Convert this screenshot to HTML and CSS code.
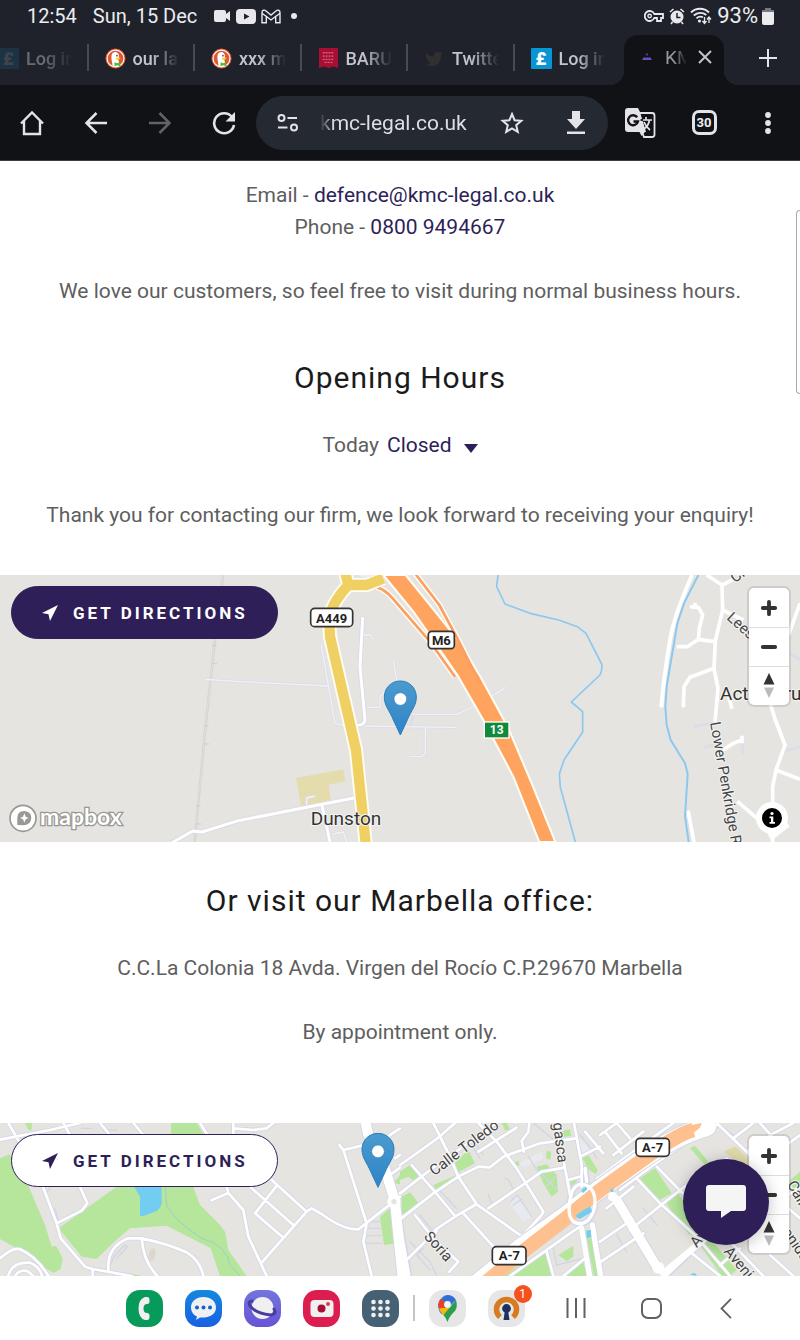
FILE: index.html
```html
<!DOCTYPE html>
<html lang="en">
<head>
<meta charset="utf-8">
<meta name="viewport" content="width=device-width, initial-scale=1">
<title>KMC Legal</title>
<link rel="stylesheet" href="styles.css">
</head>
<body>
<svg class="defs" width="0" height="0" aria-hidden="true">
  <defs>
    <linearGradient id="pin-fill" x1="0" y1="0" x2="0" y2="1"><stop offset="0" stop-color="#4b9bd0"/><stop offset="1" stop-color="#2f83c6"/></linearGradient>
    <symbol id="pin" viewBox="0 0 34 56"><path d="M17 1C8 1 1 8 1 17c0 9 5 13 9 23l7 15 7-15c4-10 9-14 9-23C33 8 26 1 17 1z" fill="url(#pin-fill)" stroke="#2e7fb8" stroke-width="1"/><circle cx="17" cy="19" r="6.3" fill="#fff" stroke="#3a7fae" stroke-width=".6"/></symbol>
    <symbol id="duck" viewBox="0 0 22 22"><circle cx="11" cy="11" r="10.5" fill="#de5833"/><circle cx="11" cy="11" r="8.8" fill="none" stroke="#fff" stroke-width="1.2"/><path d="M8 19C7.500 14 6 10 7 7c1-3 5-4 7-1 1 2 .8 4 0 6l1 6c-2 2-5 2.500-7 1z" fill="#fff"/><path d="M11.500 10.500c2-1 4-.8 5 0-1 1.500-3 2-5 1.500z" fill="#fdd20a"/><path d="M10 15l3 1 3-1v4l-3-1-3 1z" fill="#4cba3c"/><circle cx="12.500" cy="8" r=".9" fill="#2d4f8e"/></symbol>
    <symbol id="arrow" viewBox="0 0 18 18"><path d="M17 1L1 9l6.500 1.200L9 17z" fill="currentColor"/></symbol>
    <symbol id="compass" viewBox="0 0 12 26"><path d="M6 0l5.500 11.500H.5z" fill="#333"/><path d="M6 25l5-10.500H1z" fill="#bbb"/></symbol>
    <symbol id="plus" viewBox="0 0 16 16"><path d="M8 2.500v11M2.500 8h11" stroke="#333" stroke-width="3.400" stroke-linecap="round"/></symbol>
    <symbol id="minus" viewBox="0 0 16 16"><path d="M2.500 8h11" stroke="#333" stroke-width="3.400" stroke-linecap="round"/></symbol>
  </defs>
</svg>

<header class="browser">
  <div class="status">
    <span class="status-left">
      <span>12:54</span><span class="date">Sun, 15 Dec</span>
      <span class="status-icons">
      <svg width="17" height="14" viewBox="0 0 17 14"><path d="M2 1h8q2 0 2 2v2l4-3v10l-4-3v2q0 2-2 2H2q-2 0-2-2V3q0-2 2-2z" fill="#e8e8ec"/></svg>
      <svg width="20" height="15" viewBox="0 0 20 15"><rect width="20" height="15" rx="4" fill="#e8e8ec"/><path d="M8 4.500l5.500 3-5.500 3z" fill="#1f222b"/></svg>
      <svg width="20" height="15" viewBox="0 0 20 15"><path d="M1 13.800V3.500C1 1 3.500 .5 5 2l5 4 5-4c1.500-1.500 4-1 4 1.500v10.300h-4.300V7.500L10 11 5.300 7.500v6.300zM5.300 7.500L1 4.200M14.700 7.500L19 4.200" fill="none" stroke="#e8e8ec" stroke-width="1.400"/></svg>
      <svg width="8" height="8" viewBox="0 0 8 8"><circle cx="4" cy="4" r="3" fill="#e8e8ec"/></svg>
      </span>
    </span>
    <span class="status-right">
      <svg width="20" height="14" viewBox="0 0 20 14"><path d="M10.300 5H19v4h-2v3h-4V9h-2.700A5 5 0 1 1 10.300 5z" fill="none" stroke="#e8e8ec" stroke-width="1.800"/><circle cx="5.600" cy="7" r="1.700" fill="none" stroke="#e8e8ec" stroke-width="1.400"/></svg>
      <svg width="16" height="17" viewBox="0 0 16 17"><circle cx="8" cy="9" r="6.500" fill="#e8e8ec"/><path d="M1 4l3.500-3M15 4l-3.500-3M3.500 14L2 16M12.500 14l1.500 2" stroke="#e8e8ec" stroke-width="1.600"/><path d="M8 5v4.500h3.500" fill="none" stroke="#1f222b" stroke-width="1.500"/></svg>
      <svg width="22" height="18" viewBox="0 0 22 18"><path d="M1 5.500C6 .5 14 .5 19 5.500M3.800 8.500c3.600-3.500 9-3.500 12.500-.5M6.500 11.300c2-2 4.500-2 6.500-1" fill="none" stroke="#e8e8ec" stroke-width="1.800"/><circle cx="9.500" cy="14" r="1.600" fill="#e8e8ec"/><path d="M14.500 10v6M12.500 14l2 2.500 2-2.500M19 16v-6M17 12.500l2-2.500 2 2.500" fill="none" stroke="#e8e8ec" stroke-width="1.300"/></svg>
      <span class="battery">93%
      <svg width="12" height="17" viewBox="0 0 12 17"><path d="M3 0h6v2h3v3H0V2h3z" fill="#777981"/><path d="M0 4h12v11q0 2-2 2H2q-2 0-2-2z" fill="#ececef"/></svg></span>
    </span>
  </div>

  <nav class="tabstrip" aria-label="Open tabs">
    <div class="tabs">
      <a class="tab tab-faint" href="#"><span class="fav fav-pound">£</span><span class="tab-name">Log in</span></a>
      <a class="tab" href="#"><svg class="fav"><use href="#duck"/></svg><span class="tab-name">our law</span></a>
      <a class="tab" href="#"><svg class="fav"><use href="#duck"/></svg><span class="tab-name">xxx mo</span></a>
      <a class="tab" href="#"><svg class="fav" viewBox="0 0 22 22"><path d="M1 0h20v21l-5-1.500-5 1.500-5-1.500L1 21z" fill="#a90f35"/><path d="M5 5h12M5 8.500h12M5 12h12M7 15h8" stroke="#cf6580" stroke-width="1.400" stroke-dasharray="2 1"/></svg><span class="tab-name">BARUC</span></a>
      <a class="tab" href="#"><svg class="fav" viewBox="0 0 22 22"><path d="M2 5q4 4 8 4 0-5 4-5 2 0 3 1l3-1-2 3q0 11-9 12-4 0-7-2 4 0 5-2-3-1-4-3-2-3-1-7z" fill="#32302f"/></svg><span class="tab-name">Twitter</span></a>
      <a class="tab" href="#"><span class="fav fav-pound">£</span><span class="tab-name">Log in</span></a>
    </div>
    <div class="tab-active">
      <svg width="10" height="8" viewBox="0 0 10 8"><path d="M0 7h10l-2-3-2 1-1-1-1 1-2-1z" fill="#6f4cc0"/><circle cx="5" cy="1.500" r="1.200" fill="#4b3888"/></svg>
      <span class="active-name">KMC</span>
      <button class="icon-btn" aria-label="Close tab"><svg width="14" height="14" viewBox="0 0 14 14"><path d="M1 1l12 12M13 1L1 13" stroke="#c6c6cb" stroke-width="1.900"/></svg></button>
    </div>
    <button class="icon-btn new-tab" aria-label="New tab"><svg width="18" height="18" viewBox="0 0 18 18"><path d="M9 0v18M0 9h18" stroke="#e3e3e8" stroke-width="2"/></svg></button>
  </nav>

  <div class="toolbar">
    <button class="icon-btn" aria-label="Home"><svg width="26" height="26" viewBox="0 0 26 26"><path d="M2 13.500L13 2.500l11 11M5 11v13h16V11" fill="none" stroke="#e3e3e8" stroke-width="2.400"/></svg></button>
    <button class="icon-btn" aria-label="Back"><svg width="24" height="24" viewBox="0 0 24 24"><path d="M23 12H3M12.500 2L2.500 12l10 10" fill="none" stroke="#e3e3e8" stroke-width="2.500"/></svg></button>
    <button class="icon-btn" aria-label="Forward"><svg width="24" height="24" viewBox="0 0 24 24"><path d="M1 12h20M11.500 2l10 10-10 10" fill="none" stroke="#626367" stroke-width="2.500"/></svg></button>
    <button class="icon-btn" aria-label="Reload"><svg width="24" height="24" viewBox="0 0 24 24"><path d="M20 6A10 10 0 1 0 22 14" fill="none" stroke="#e3e3e8" stroke-width="2.600"/><path d="M23 1v9.500h-9.500z" fill="#e3e3e8"/></svg></button>
    <div class="omnibox">
      <button class="icon-btn" aria-label="Site information"><svg width="22" height="18" viewBox="0 0 22 18"><g fill="none" stroke="#e3e3e8" stroke-width="2"><circle cx="4.500" cy="4" r="3"/><path d="M10.500 4H20M1 13.500h9.500"/><circle cx="17" cy="13.500" r="3"/></g></svg></button>
      <input class="url" type="text" aria-label="Address" value="kmc-legal.co.uk">
      <button class="icon-btn" aria-label="Bookmark"><svg width="24" height="24" viewBox="0 0 24 24"><path d="M12 3l2.600 6.200 6.700.6-5.100 4.400 1.600 6.600L12 17.300l-5.800 3.500 1.600-6.600L2.700 9.800l6.700-.6z" fill="none" stroke="#e3e3e8" stroke-width="2"/></svg></button>
      <button class="icon-btn" aria-label="Download"><svg width="20" height="24" viewBox="0 0 20 24"><path d="M6 0h8v8h5l-9 10-9-10h5zM1 20.500h18V23H1z" fill="#e3e3e8"/></svg></button>
    </div>
    <button class="icon-btn" aria-label="Translate"><svg width="31" height="30" viewBox="0 0 31 30"><path d="M14 5h13q2.500 0 2.500 2.500v19q0 2.500-2.500 2.500H19l-2-5" fill="none" stroke="#e3e3e8" stroke-width="1.800"/><path d="M3 0h10l2 4 6 20H3q-3 0-3-3V3q0-3 3-3z" fill="#e3e3e8"/><path d="M14.500 24h5.500l-3.500 4z" fill="#e3e3e8"/><path d="M12.200 9.300A5 5 0 1 0 13 13.500H8.500" fill="none" stroke="#111216" stroke-width="2.300"/><path d="M15.500 12h2.500" stroke="#111216" stroke-width="1.800"/><path d="M18 12h9M21 9v3M24.500 12q-1 6-5.500 9M19 14q2 5 6 8" fill="none" stroke="#e3e3e8" stroke-width="1.700"/></svg></button>
    <button class="icon-btn" aria-label="30 open tabs"><span class="tab-count">30</span></button>
    <button class="icon-btn" aria-label="Menu"><svg width="6" height="24" viewBox="0 0 6 24"><g fill="#e3e3e8"><circle cx="3" cy="4" r="2.900"/><circle cx="3" cy="12" r="2.900"/><circle cx="3" cy="20" r="2.900"/></g></svg></button>
  </div>
</header>

<div class="edge-handle"></div>

<main>
  <section class="info">
    <p>Email - <a href="#">defence@kmc-legal.co.uk</a><br>Phone - <a href="#">0800 9494667</a></p>
    <p>We love our customers, so feel free to visit during normal business hours.</p>
    <h2>Opening Hours</h2>
    <div class="hours"><span>Today</span><button class="closed">Closed<svg width="14" height="10" viewBox="0 0 14 10"><path d="M0 0h14L7 9z" fill="#2e1f58"/></svg></button></div>
    <p>Thank you for contacting our firm, we look forward to receiving your enquiry!</p>
  </section>

  <section class="map map-office">
    <svg class="canvas" viewBox="0 15 2400 801" preserveAspectRatio="xMidYMid slice" role="img" aria-label="Map of Dunston">
      <g fill="none" stroke-linejoin="round">
        <path d="M672 15L645 230 618 480 586 816M667 15L640 230 613 480 582 816" stroke="#cfcdc9" stroke-width="2"/>
        <path d="M636 227h14M637 280h14M612 468h14M614 522h14M588 708h14M590 762h14" stroke="#cfcdc9" stroke-width="3"/>
        <path d="M888 624L1030 598 1036 634 985 644 993 690 950 700 903 706z" fill="#e4dcac"/>
        <g stroke="#dcdde8" stroke-width="9"><path d="M618 328L720 335 986 348M964 226L1005 460 1030 466 1068 466M1092 468L1360 473 1572 472M1278 473M1100 412H1140V380L1160 360M1180 272L1190 330M1235 433H1370L1425 408M1235 433L1230 470M1476 473V550L1465 560H1430M1400 433H1570L1625 408 1718 352M920 706V684L945 678M1090 195H1112L1120 208M1000 792L1030 786 1040 816M2080 470L2140 458M2110 532L2160 522M2350 240L2400 268M2350 545L2400 530M2226 520L2230 552M2062 722L2070 780" visibility="hidden"/></g>
        <g stroke="#dcdde8" stroke-width="9"><path d="M618 328L720 335 986 348M964 226L1005 460 1030 466 1068 466M1092 468L1200 470 1370 472M1276 473V550L1265 560H1230M1100 412H1140V380L1160 360M1180 272L1190 330M1235 433H1370L1425 408 1518 352M1240 433L1232 470M920 706V684L945 678M1090 195H1112L1120 208M1000 792L1030 786 1040 816M2080 470L2140 458M2110 532L2160 522M2350 240L2400 268M2350 545L2400 530M2226 520L2230 552M2062 722L2070 780"/></g>
        <g stroke="#f2f2f5" stroke-width="4"><path d="M618 328L720 335 986 348M964 226L1005 460 1030 466 1068 466M1092 468L1200 470 1370 472M1276 473V550L1265 560H1230M1100 412H1140V380L1160 360M1180 272L1190 330M1235 433H1370L1425 408 1518 352M920 706V684L945 678M1090 195H1112L1120 208M1000 792L1030 786 1040 816"/></g>
        <path d="M1088 145L1080 290 1095 450Q1094 466 1070 466M520 816L578 783 606 786 715 752 1062 684M966 706L990 816" stroke="#d8d9e6" stroke-width="14" stroke-linecap="round"/>
        <path d="M1088 145L1080 290 1095 450Q1094 466 1070 466M520 816L578 783 606 786 715 752 1062 684M966 706L990 816" stroke="#fff" stroke-width="9" stroke-linecap="round"/>
        <path d="M2076 15Q2020 145 2010 210 1990 330 1984 412" stroke="#fff" stroke-width="12"/>
        <g stroke="#fff" stroke-width="11"><path d="M2120 15L2166 45 2168 120 2146 212 2142 295 2154 355 2145 455M2166 45L2200 28M2168 120L2230 150M2400 100L2366 194M2070 110L2095 112 2108 135 2098 175 2095 208 2145 215M2095 208L2062 230H2030M2142 295L2070 322 2052 350 2050 412M2312 405L2326 450 2355 525 2328 600 2318 650V816M2328 600L2400 628M2212 694L2295 765 2320 812M2320 800L2366 765M2168 540L2200 520 2226 510M2180 360L2196 416M2064 722L2082 816M2085 98V112M2226 497V520"/></g>
        <path d="M1494 15L1490 50 1515 102 1590 130 1676 150 1732 170 1758 190 1805 282Q1808 300 1800 315L1714 396 1748 425V486L1692 570 1678 612 1681 652 1726 816" stroke="#8cc8f0" stroke-width="5"/>
        <path d="M2095 15L2052 100 2032 160 2000 350 1996 410 2000 465 2012 510 2055 580 2063 612 2055 740 2066 816" stroke="#8cc8f0" stroke-width="6"/>
        <path d="M1130 52Q1155 58 1178 85L1290 215 1365 320M1245 10L1318 105 1372 205 1440 340" stroke="#fffdf5" stroke-width="17"/>
        <path d="M1150 15L1240 125 1310 225 1375 320 1450 450 1540 620 1618 816H1666L1595 640 1525 475 1440 318 1375 212 1300 118 1217 15z" fill="#ffa45e" stroke="#fffdf5" stroke-width="6"/>
        <path d="M1130 52Q1155 58 1178 85L1290 215 1365 320M1245 10L1318 105 1372 205 1440 340" stroke="#fb9f62" stroke-width="8"/>
        <path d="M1035 5L1045 45Q990 105 988 150L990 200 1068 540 1097 820M1045 45L1100 45 1150 25" stroke="#fffdf5" stroke-width="42"/>
        <path d="M1035 5L1045 45Q990 105 988 150L990 200 1068 540 1097 820M1045 45L1100 45 1150 25" stroke="#f0cf63" stroke-width="31"/>
        <path d="M1068 8Q1098 38 1138 8z" fill="#eeeeee"/>
      </g>
      <g class="shield"><rect x="932" y="115" width="126" height="55" rx="12"/><text x="995" y="158">A449</text><rect x="1285" y="184" width="78" height="52" rx="10"/><text x="1324" y="225">M6</text></g>
      <rect x="1453" y="456" width="74" height="48" fill="#118a3c" stroke="#fff" stroke-width="4"/><text class="exit" x="1490" y="492">13</text>
      <g class="place"><text x="932" y="766">Dunston</text><text x="2160" y="390">Acton Trussell</text></g>
      <g class="street"><text transform="translate(2178 146) rotate(42)">Lees Lane</text><text transform="translate(2130 458) rotate(80)">Lower Penkridge Road</text><text transform="translate(2204 40) rotate(-35)">Cl</text></g>
      <use href="#pin" x="1150" y="330" width="102" height="168"/>
      <g class="logo"><circle cx="69" cy="745" r="39" fill="#fff" stroke="#999894" stroke-width="5"/><path d="M52 765V745Q52 723 73 723 94 725 94 744 92 766 70 766z" fill="#999894"/><path d="M73 730l4 10 9 4-9 4-4 10-4-10-9-4 9-4z" fill="#fff"/><text x="120" y="765">mapbox</text></g>
    </svg>
    <button class="directions directions-dark"><svg width="18" height="18"><use href="#arrow"/></svg>GET DIRECTIONS</button>
    <div class="zoom"><button aria-label="Zoom in"><svg width="18" height="18"><use href="#plus"/></svg></button><button aria-label="Zoom out"><svg width="18" height="18"><use href="#minus"/></svg></button><button aria-label="Reset bearing"><svg width="12" height="26"><use href="#compass"/></svg></button></div>
    <button class="attrib" aria-label="Attribution"><svg width="20" height="20" viewBox="0 0 20 20"><circle cx="10" cy="10" r="10" fill="#000"/><circle cx="10" cy="5.500" r="1.600" fill="#fff"/><path d="M7.500 8.500h3.800V14H13v1.800H7.500V14H9v-3.700H7.500z" fill="#fff"/></svg></button>
  </section>

  <section class="info info-marbella">
    <h2>Or visit our Marbella office:</h2>
    <p>C.C.La Colonia 18 Avda. Virgen del Rocío C.P.29670 Marbella</p>
    <p>By appointment only.</p>
  </section>

  <section class="map map-marbella">
    <svg class="canvas" viewBox="0 24 2400 459" preserveAspectRatio="xMidYMid slice" role="img" aria-label="Map of Marbella">
      <defs>
        <path id="west-lanes" d="M0 74L150 45 240 24M25 24L60 85M190 24L210 60M300 24l30 36M400 24l30 36M125 205L170 325 182 370 255 455 278 462 395 483M170 325L245 287 262 265 240 215M0 430Q40 395 60 403 110 425 145 483M25 483Q35 440 90 443 120 455 126 483M45 483Q60 460 85 470L100 483M325 465Q320 395 385 370L425 370Q500 385 560 412 600 435 610 483M425 370Q430 440 472 483M278 462V483M600 24l22 35M635 256L685 234 730 285 745 365 800 483M685 234L680 215M785 443L920 290 935 280 965 297Q1030 345 1075 343L1200 245M920 290L815 195M850 368L765 295 828 215M880 330L750 215M700 24V55M700 40L760 45 800 40 820 24M1018 90L1030 105 1100 325 1090 380 1115 483M1030 105L1085 92M1140 80L1200 40M1185 130L1200 120M1170 180L1200 158"/>
        <path id="east-lanes" d="M100 24L145 115 175 185 230 268 360 360H385M0 150L110 72 165 24M0 235L90 165 290 24M35 150L100 225 165 303M0 313L100 235 175 185 235 155 270 157 310 125 420 85 528 70M235 24L290 80 350 160 430 290 425 300 370 360M105 345L165 305 230 267M265 280L375 205 425 170 495 158M190 295L285 400M45 300L100 370 175 440 148 470M0 450L30 425 110 345 100 370M372 110L365 78 385 50 388 24M235 110L350 38M470 24L510 240M522 24L545 150V215M540 125L600 95M505 195L545 183M330 483L510 355 540 335M440 410L460 483M490 483L555 430M590 190L600 185 720 95 820 24M600 60L650 24M555 50L610 115M615 50L665 115M650 24L690 70M640 120L730 50M660 225L760 150 900 52 950 24M770 155L1000 390 1090 483M710 190L780 265 890 365 990 483M690 345L790 265 860 210M620 280L700 215M950 24L1060 130M1000 70L1060 24M1040 110L1120 55 1180 24M1080 24L1130 80M1165 240L1200 215M1165 280L1200 310M1160 90L1200 60M595 445L730 355M600 380L690 318M870 410L960 483M1020 400L960 450M1110 420L1180 483M860 210L980 130"/>
        <g id="east-avenues"><path d="M0 330L28 490M0 300L-15 260"/><path d="M545 335L570 483M577 328L603 483M650 255L770 455M800 480L905 380M555 160L560 200"/><path d="M543 208C570 208 585 230 585 260S568 326 540 326 505 300 508 270 520 208 543 208z"/></g>
      </defs>
      <g fill="#b5e69c">
        <path d="M0 130L28 118 80 200 135 330 155 395 168 392 188 430 182 462 160 474 130 455 60 405 0 372zM75 24H96L95 46 85 44zM513 24H590L612 60H513zM176 340L350 215H580L600 270 660 330 675 350 685 405 740 483H660L632 400 500 332 390 340 345 378 290 432 245 425zM385 474l40 9h-40zM1140 305L1170 280 1188 385 1152 390zM1180 205L1200 180V208z"/>
        <path transform="translate(1200)" d="M0 170L30 150 60 190 45 200 25 185 0 195zM5 245L30 232 60 270 5 308zM165 145L205 105 225 145 175 172zM100 210L170 180 135 215 110 225zM305 24h15l10 18-15 5zM340 145l15-8 6 12-16 6zM410 155L440 148 470 180 474 230 455 245 430 205zM440 107l13 3-2 24-12-4zM488 48l22-6 4 20-24 4zM510 198l22-4-15 28zM545 125L565 120 593 165 588 178 565 162zM720 190L765 160 815 235 772 258zM798 265L835 235 900 330 868 360zM870 100L885 92 925 140 915 150zM900 390L930 370 1010 465 990 483H965zM655 215L760 145 765 152 670 218zM310 483L430 408 440 412 455 483zM475 420L520 392V425L500 438zM500 483L550 440 560 483zM555 345H570L598 483H582zM1165 200L1200 170V230L1185 225z"/>
      </g>
      <path d="M1172 110L1205 94 1245 130V165z" transform="translate(1000)" fill="#e1dbac"/><path d="M2172 110L2205 94 2245 130V165z" fill="#e1dbac"/>
      <g fill="#e8eaf0" transform="translate(1200)"><path d="M355 145L425 110 432 130 370 158zM325 260L350 240 400 305 370 322zM530 60L580 115 545 130z"/></g>
      <path d="M402 214H485V265Q480 288 460 292L430 303H420V245z" fill="#72cdf1"/>
      <path d="M496 215L500 270Q520 315 605 370 680 390 690 450L720 483" fill="none" stroke="#9bcfc6" stroke-width="3"/>
      <ellipse cx="456" cy="419" rx="10" ry="20" fill="#dcd8d0" transform="rotate(15 456 419)"/>
      <g fill="none" stroke-linejoin="round" stroke-linecap="round">
        <path d="M328 455L345 420 375 390 382 396 350 430M165 280L175 320M150 220l-12 15M1100 320h40M1100 340h43M1100 362h45M1100 385h45M245 40h30M310 45h40" stroke="#d2d5e5" stroke-width="4"/>
        <path transform="translate(1200)" d="M205 75L240 130M215 65L250 120M315 190Q330 190 340 230M265 240l12 30M330 262L352 240 395 305M340 270l25-18M110 240L155 290M120 228L170 280M60 300L100 350M30 380L90 440 110 483M70 400L50 420 90 465M80 350l25 25M470 180L440 215M420 170L470 225M460 400L470 450 550 430M540 60Q575 100 590 130M400 24L480 90M385 125L420 180M950 24L1000 60M730 280L770 330M650 360L680 410" stroke="#d2d5e5" stroke-width="4"/>
        <g stroke="#d5d7e6" stroke-width="13"><use href="#west-lanes"/><use href="#east-lanes" transform="translate(1200)"/></g>
        <g stroke="#d5d7e6"><path d="M1095 15L1105 60M1150 145L1185 260 1208 490" stroke-width="36"/><use href="#east-avenues" transform="translate(1200)" stroke-width="20"/><path d="M1850 255L1970 455" stroke-width="34"/></g>
        <g stroke="#fff" stroke-width="8"><use href="#west-lanes"/><use href="#east-lanes" transform="translate(1200)"/></g>
        <g transform="translate(1200)"><path d="M215 520L360 400 500 300 600 222 720 137Q830 60 920 35" stroke="#d5d7e6" stroke-width="62"/><path d="M215 520L360 400 500 300 600 222 720 137Q830 60 920 35" stroke="#fff" stroke-width="56"/><path d="M230 525L375 405 500 308 600 226 720 140Q830 58 880 45" stroke="#ffc08f" stroke-width="43" stroke-linecap="butt"/><path d="M860 33L905 24 900 38 868 64z" fill="#ffc08f"/><circle cx="935" cy="16" r="20" stroke="#fff" stroke-width="8"/></g>
        <path d="M1095 15L1105 60M1150 145L1185 260 1208 490" stroke="#fff" stroke-width="30"/>
        <use href="#east-avenues" transform="translate(1200)" stroke="#fff" stroke-width="10"/>
        <path d="M1745 340L1770 490M1777 330L1803 490" stroke="#fff" stroke-width="16"/>
        <path d="M1850 255L1970 455" stroke="#fff" stroke-width="28"/><circle cx="1838" cy="245" r="14" fill="#fff"/><circle cx="1975" cy="458" r="18" fill="#fff"/><path d="M1990 475L2110 375" stroke="#fff" stroke-width="20"/>
        <circle cx="1182" cy="260" r="14" stroke="#fff" stroke-width="12" fill="#e5e4e0"/>
        <path d="M1744 225l14-10 4 8-14 12zM1728 300L1770 274 1776 290 1740 312 1730 306zM1760 348l12-4 2 22-14 2zM1832 222l8-2v10l-8 2zM2068 478l16-4 8 9z" fill="#72cdf1"/>
      </g>
      <g class="shield"><rect x="1477" y="395" width="101" height="54" rx="12"/><text x="1528" y="436">A-7</text><rect x="1908" y="70" width="100" height="54" rx="12"/><text x="1958" y="111">A-7</text></g>
      <g class="street"><text transform="translate(1303 184) rotate(-37)">Calle Toledo</text><text transform="translate(1656 0) rotate(83)">agasca</text><text transform="translate(1270 366) rotate(48)">Soria</text><text transform="translate(2090 400) rotate(-50)">Avenida</text><text transform="translate(2170 410) rotate(50)">Avenida</text><text transform="translate(2360 208) rotate(60)">Calle</text><text transform="translate(2345 352) rotate(55)">enida</text></g>
      <use href="#pin" x="1083" y="52" width="102" height="168"/>
    </svg>
    <button class="directions directions-light"><svg width="18" height="18"><use href="#arrow"/></svg>GET DIRECTIONS</button>
    <div class="zoom"><button aria-label="Zoom in"><svg width="18" height="18"><use href="#plus"/></svg></button><button aria-label="Zoom out"><svg width="18" height="18"><use href="#minus"/></svg></button><button aria-label="Reset bearing"><svg width="12" height="26"><use href="#compass"/></svg></button></div>
    <button class="chat" aria-label="Open chat"><svg width="40" height="34" viewBox="0 0 40 34"><path d="M3 0h34q3 0 3 3v20q0 3-3 3H25l-10 7v-7H3q-3 0-3-3V3q0-3 3-3z" fill="#f5f5f6"/></svg></button>
  </section>
</main>

<nav class="dock" aria-label="System">
  <div class="apps">
    <button class="app app-phone" aria-label="Phone"><svg width="37" height="37" viewBox="0 0 37 37"><path d="M19 7h2q2.500 0 2.500 3v1.500q0 2.500-2.500 2.500-3.500 0-3.500 4.500T21 23q2.500 0 2.500 2.500V27q0 3-2.500 3h-2q-6.500-2-6.500-11.500T19 7z" fill="#f0f0f0"/></svg></button>
    <button class="app app-messages" aria-label="Messages"><svg width="37" height="37" viewBox="0 0 37 37"><path d="M18.500 7C26 7 31 11.500 31 17.500S26 27 19 27.500h-4L11 30l1-3.500C8 25 6 21 6 17.500 6 11.500 11 7 18.500 7z" fill="#f0f0f0"/><g fill="#1263c9"><circle cx="12" cy="17.500" r="2"/><circle cx="18.500" cy="17.500" r="2"/><circle cx="25" cy="17.500" r="2"/></g></svg></button>
    <button class="app app-internet" aria-label="Internet"><svg width="37" height="37" viewBox="0 0 37 37"><circle cx="18.500" cy="18" r="11" fill="#f0f0f0"/><path d="M8 11Q2 12 8 18T27 25Q33 24 30 19" fill="none" stroke="#4a3ca0" stroke-width="3" stroke-linecap="round"/></svg></button>
    <button class="app app-camera" aria-label="Camera"><svg width="37" height="37" viewBox="0 0 37 37"><rect x="7.500" y="10" width="23" height="17" rx="4" fill="#f0f0f0"/><circle cx="18.500" cy="18.500" r="4" fill="#a80e36"/><circle cx="25" cy="14" r="2" fill="#dd3b52"/></svg></button>
    <button class="app app-all" aria-label="All apps"><svg width="37" height="37" viewBox="0 0 37 37"><g fill="#f0f0f0"><circle cx="11.500" cy="12" r="2.300"/><circle cx="18.500" cy="12" r="2.300"/><circle cx="25.500" cy="12" r="2.300"/><circle cx="11.500" cy="18.500" r="2.300"/><circle cx="18.500" cy="18.500" r="2.300"/><circle cx="25.500" cy="18.500" r="2.300"/><circle cx="11.500" cy="25" r="2.300"/><circle cx="18.500" cy="25" r="2.300"/><circle cx="25.500" cy="25" r="2.300"/></g></svg></button>
  </div>
  <div class="dock-rule"></div>
  <div class="apps">
    <button class="app app-plain" aria-label="Maps"><svg width="37" height="37" viewBox="0 0 37 37"><path d="M9.500 18Q10 22 13 24.500L27 10Q24 5 18.500 5T9.500 14z" fill="#2f6fd6"/><path d="M12 8.500L18 14 12 22Q6 14 12 8.500z" fill="#e04332"/><path d="M10 18.500L22 17 15 26Q11 22 10 18.500z" fill="#f5b90a"/><path d="M27 10Q30 19 23 24 19.500 28 18.500 32 17 28 14.500 25z" fill="#2c9d4c"/><circle cx="18.500" cy="14.500" r="3.400" fill="#f5f5f5"/></svg></button>
    <button class="app app-plain" aria-label="VPN, 1 notification"><svg width="37" height="37" viewBox="0 0 37 37"><path d="M12 27A10 10 0 1 1 25 27" fill="none" stroke="#d97920" stroke-width="5.500"/><circle cx="18.500" cy="18.500" r="4.400" fill="#1c3360"/><path d="M17 20h3l1.500 10h-6z" fill="#1c3360"/></svg><span class="badge">1</span></button>
  </div>
  <div class="keys">
    <button class="icon-btn" aria-label="Recents"><svg width="20" height="20" viewBox="0 0 20 20"><path d="M1.500 0v20M10 0v20M18.500 0v20" stroke="#616161" stroke-width="2"/></svg></button>
    <button class="icon-btn" aria-label="Home"><svg width="21" height="21" viewBox="0 0 21 21"><rect x="1" y="1" width="19" height="19" rx="6" fill="none" stroke="#616161" stroke-width="2"/></svg></button>
    <button class="icon-btn" aria-label="Back"><svg width="12" height="21" viewBox="0 0 12 21"><path d="M11 .8L1.500 10.500 11 20.200" fill="none" stroke="#616161" stroke-width="1.800"/></svg></button>
  </div>
</nav>
</body>
</html>
```
FILE: styles.css
```css
* { box-sizing: border-box; }
body { margin: 0; font-family: Roboto, "Liberation Sans", sans-serif; background: #fff; color: #5e5e5e; }
button { font: inherit; color: inherit; background: none; border: 0; padding: 0; margin: 0; cursor: pointer; }
a { color: #2e1f58; text-decoration: none; }
svg { display: block; flex: none; }
.defs { position: absolute; }
.icon-btn { display: flex; align-items: center; justify-content: center; }

.browser { background: #1f222b; color: #ececef; }
.status { display: flex; justify-content: space-between; align-items: center; height: 35px; padding: 0 26px 3px 27px; font-size: 20px; line-height: 24px; }
.status-left, .status-right { display: flex; align-items: center; }
.date { margin-left: 16px; }
.status-icons { display: flex; align-items: center; gap: 5px; margin-left: 17px; }
.status-icons svg:last-child { margin-left: 4px; }
.status-right { gap: 5px; }
.battery { display: flex; align-items: center; gap: 4px; font-size: 22px; }

.tabstrip { display: flex; height: 50px; overflow: hidden; }
.tabs { flex: 1; display: grid; grid-template-columns: repeat(6, minmax(0, 1fr)); margin-left: -18px; margin-right: 3px; }
.tab { position: relative; display: flex; align-items: center; gap: 7px; padding: 0 16px 4px 16px; color: #c4c5ca; font-size: 18px; font-weight: 500; overflow: hidden; }
.tab:not(:last-child)::after { content: ""; position: absolute; right: 0; top: 9px; width: 2px; height: 27px; background: #484b53; }
.fav { width: 21px; height: 21px; flex: none; }
.fav-pound { background: #0795d4; color: #fff; font-weight: 900; font-size: 18px; line-height: 21px; text-align: center; border-radius: 1px; }
.tab-name, .active-name { white-space: nowrap; overflow: hidden; flex: 1; mask-image: linear-gradient(90deg, #000 40%, transparent); }
.tab-faint .fav { opacity: .15; }
.tab-faint .tab-name { opacity: .45; }
.tab-active { position: relative; width: 100px; display: flex; align-items: center; background: #111216; border-radius: 14px 14px 0 0; padding: 0 12px 6px 18px; color: #98999d; font-size: 19px; }
.tab-active::before, .tab-active::after { content: ""; position: absolute; bottom: 0; width: 14px; height: 14px; }
.tab-active::before { right: 100%; background: radial-gradient(circle at 0 0, transparent 14px, #111216 14px); }
.tab-active::after { left: 100%; background: radial-gradient(circle at 100% 0, transparent 14px, #111216 14px); }
.active-name { margin: 0 11px 0 13px; }
.new-tab { width: 76px; padding: 0 0 5px 12px; }

.toolbar { display: flex; align-items: center; height: 76px; background: #111216; border-bottom: 1px solid #3d3e42; }
.toolbar > .icon-btn { width: 64px; height: 64px; }
.omnibox { flex: 1; display: grid; grid-template-columns: 64px minmax(0, 1fr) 64px 64px; height: 54px; border-radius: 27px; background: #252932; }
.url { width: 100%; padding: 0; border: 0; background: none; font: 21px Roboto, sans-serif; color: #dedee3; mask-image: linear-gradient(90deg, transparent, #000 14px); }
.tab-count { width: 25px; height: 25px; border: 3px solid #e3e3e8; border-radius: 7px; font-size: 13px; font-weight: 700; line-height: 19px; }

.edge-handle { position: absolute; right: 0; top: 210px; width: 4px; height: 184px; border: 1px solid #a9a9a9; border-right: 0; border-radius: 5px 0 0 5px; }

.info { padding: 18px 24px 44px; text-align: center; font-size: 21px; line-height: 32px; }
.info p { margin: 0; }
.info p + p { margin-top: 32px; }
.info h2 { margin: 51px 0 31px; color: #1b1b1b; font-size: 30px; font-weight: 400; line-height: 40px; letter-spacing: 1px; }
.hours { display: flex; justify-content: center; gap: 8px; margin-bottom: 38px; }
.closed { display: flex; align-items: center; gap: 12px; color: #2e1f58; }
.closed svg { margin-top: 8px; }
.info-marbella { padding: 39px 24px 75px; }
.info-marbella h2 { margin-top: 0; }

.map { position: relative; background: #e5e4e0; overflow: hidden; }
.map-office { height: 267px; }
.map-marbella { height: 153px; }
.canvas { width: 100%; height: 100%; }
.canvas text { font-family: Roboto, sans-serif; }
.shield rect { fill: #fff; stroke: #333; stroke-width: 5px; }
.shield text { font-size: 39px; font-weight: 700; text-anchor: middle; fill: #222; }
.canvas .exit { font-size: 36px; font-weight: 700; text-anchor: middle; fill: #fff; }
.place text { font-size: 57px; fill: #333; stroke: #f4f4f2; stroke-width: 6px; paint-order: stroke; }
.street text { font-size: 45px; fill: #444; stroke: #f4f4f2; stroke-width: 6px; paint-order: stroke; }
.canvas .logo text { font-family: Lato, sans-serif; font-size: 69px; font-weight: 700; fill: #fff; stroke: #999894; stroke-width: 8px; paint-order: stroke; }

.directions { position: absolute; left: 11px; top: 11px; display: flex; align-items: center; gap: 14px; height: 53px; padding: 0 29px; border: 1px solid #2e1f58; border-radius: 27px; font-size: 17px; font-weight: 700; letter-spacing: 3px; white-space: nowrap; }
.directions-dark { background: #2e1f58; color: #fff; }
.directions-light { background: #fff; color: #2e1f58; }
.zoom { position: absolute; right: 11px; top: 13px; width: 40px; background: #fff; border-radius: 5px; box-shadow: 0 0 0 2px rgba(0, 0, 0, .1); }
.zoom button { display: flex; align-items: center; justify-content: center; width: 100%; height: 39px; }
.zoom button + button { border-top: 1px solid #ddd; }
.attrib { position: absolute; right: 12px; bottom: 8px; width: 32px; height: 32px; border-radius: 50%; background: #fff; display: flex; align-items: center; justify-content: center; }
.chat { position: absolute; right: 31px; top: 36px; width: 86px; height: 86px; display: flex; align-items: center; justify-content: center; border-radius: 50%; background: #2e1f58; box-shadow: 0 2px 16px rgba(0, 0, 0, .25); }

.dock { display: flex; align-items: center; justify-content: center; gap: 14px; height: 64px; padding-left: 89px; background: #fff; }
.apps { display: flex; gap: 22px; }
.app { position: relative; width: 37px; height: 37px; border-radius: 14px; }
.app-phone { background: #079b5b; }
.app-messages { background: linear-gradient(#1488df, #1960e4); }
.app-internet { background: linear-gradient(#7475dc, #6754d5); }
.app-camera { background: #dc1d50; }
.app-all { background: #466174; }
.app-plain { background: #e6e6e6; }
.dock-rule { width: 2px; height: 26px; background: #c4c4c4; }
.badge { position: absolute; right: -7px; top: -5px; width: 18px; height: 18px; border-radius: 50%; background: #f4511e; color: #fff; font-size: 12px; line-height: 18px; text-align: center; }
.keys { display: flex; }
.keys .icon-btn { width: 75px; height: 40px; }
```
